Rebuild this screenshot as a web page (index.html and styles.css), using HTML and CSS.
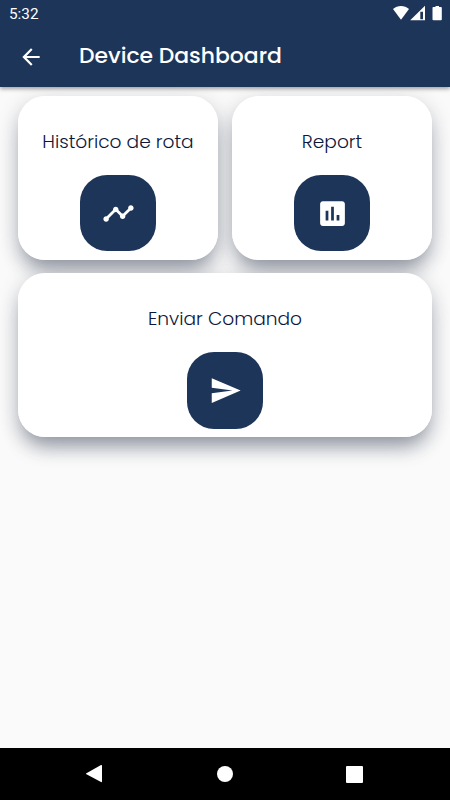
FILE: index.html
```html
<!DOCTYPE html>
<html lang="pt">
<head>
    <meta charset="UTF-8">
    <meta name="viewport" content="width=device-width, initial-scale=1.0">
    <title>Device Dashboard</title>
    <link rel="stylesheet" href="styles.css">
</head>
<body>
    <header class="header">
        <div class="status-bar">
            <span class="clock">5:32</span>
            <svg class="status-icons" width="52" height="18" viewBox="0 0 52 18" fill="#fff">
                <path d="M2 4C6.500 0 13.500 0 18 4L10 14.800Z"/>
                <path fill-rule="evenodd" d="M19.200 15.300L34 0.800V15.300ZM29.300 6.800V14.300H32V6.800Z"/>
                <path d="M42.300 2H44.500V1H48V2H50Q50.800 2 50.800 3V14.500Q50.800 15.300 49.800 15.300H42.500Q41.500 15.300 41.500 14.500V3Q41.500 2 42.300 2Z"/>
            </svg>
        </div>
        <div class="app-bar">
            <svg class="back" width="26" height="26" viewBox="0 0 24 24" fill="#fff">
                <path d="M20 11H7.830l5.590-5.590L12 4l-8 8 8 8 1.410-1.410L7.830 13H20v-2z"/>
            </svg>
            <h1>Device Dashboard</h1>
        </div>
    </header>

    <main class="dashboard">
        <div class="card">
            <h2>Histórico de rota</h2>
            <div class="tile">
                <svg width="33" height="33" viewBox="0 0 24 24" fill="#fff">
                    <path d="M23 8c0 1.100-.9 2-2 2-.18 0-.35-.02-.51-.07l-3.560 3.550c.05.16.07.34.07.52 0 1.100-.9 2-2 2s-2-.9-2-2c0-.18.02-.36.07-.52l-2.550-2.550c-.16.05-.34.07-.52.07s-.36-.02-.52-.07l-4.550 4.560c.05.16.07.33.07.51 0 1.100-.9 2-2 2s-2-.9-2-2 .9-2 2-2c.18 0 .35.02.51.07l4.560-4.550C8.020 9.360 8 9.180 8 9c0-1.100.9-2 2-2s2 .9 2 2c0 .18-.02.36-.07.52l2.550 2.550c.16-.05.34-.07.52-.07s.36.02.52.07l3.550-3.560C19.020 8.350 19 8.180 19 8c0-1.100.9-2 2-2s2 .9 2 2z"/>
                </svg>
            </div>
        </div>
        <div class="card">
            <h2>Report</h2>
            <div class="tile">
                <svg width="33" height="33" viewBox="0 0 24 24" fill="#fff">
                    <path d="M19 3H5c-1.100 0-2 .9-2 2v14c0 1.100.9 2 2 2h14c1.100 0 2-.9 2-2V5c0-1.100-.9-2-2-2zM9 17H7v-7h2v7zm4 0h-2V7h2v10zm4 0h-2v-4h2v4z"/>
                </svg>
            </div>
        </div>
        <div class="card wide">
            <h2>Enviar Comando</h2>
            <div class="tile">
                <svg width="33" height="33" viewBox="0 0 24 24" fill="#fff">
                    <path d="M2.010 21L23 12 2.010 3 2 10l15 2-15 2z"/>
                </svg>
            </div>
        </div>
    </main>

    <nav class="nav-bar">
        <svg width="18" height="20" viewBox="0 0 18 20" fill="#fff">
            <path d="M0 9.500L15 1.100Q16 0.800 16 1.800V17.200Q16 18.500 15 18L0 9.900Z"/>
        </svg>
        <span class="home"></span>
        <span class="recents"></span>
    </nav>
</body>
</html>
```

FILE: styles.css
```css
* {
    box-sizing: border-box;
}

body {
    margin: 0;
    height: 800px;
    display: flex;
    flex-direction: column;
    overflow: hidden;
    background-color: #fafafa;
    font-family: 'Poppins', 'Inter', sans-serif;
}

.header {
    position: relative;
    z-index: 2;
    height: 87px;
    flex: none;
    background-color: #1d3559;
    color: #fff;
    box-shadow: 0 2px 4px rgba(0,0,0,0.35);
}

.status-bar {
    height: 26px;
    padding: 5px 7px 0 9px;
    display: flex;
    justify-content: space-between;
}

.clock {
    font-family: 'Roboto', sans-serif;
    font-size: 15.3px;
    line-height: 18px;
}

.app-bar {
    height: 61px;
    padding-left: 18px;
    display: flex;
    align-items: center;
}

.back {
    flex: none;
}

h1 {
    margin: -3px 0 0 35px;
    font-size: 21.9px;
    font-weight: 500;
    white-space: nowrap;
}

.dashboard {
    position: relative;
    z-index: 1;
    flex: 1;
    padding: 9px 17.6px;
    display: grid;
    grid-template-columns: 1fr 1fr;
    grid-template-rows: 164px 164px;
    gap: 13.3px;
}

.card {
    position: relative;
    border-radius: 27px;
    background-color: #fff;
    display: flex;
    flex-direction: column;
    align-items: center;
    padding-top: 32px;
}

/* shadow sits under all the cards */
.card::before {
    content: '';
    position: absolute;
    inset: 0;
    z-index: -1;
    border-radius: 27px;
    box-shadow: 0 14px 20px -5px rgba(29,40,63,0.42), 0 4px 22px rgba(29,40,63,0.16);
}

.wide {
    grid-column: span 2;
}

h2 {
    margin: 0 0 18.800px;
    font-size: 18.6px;
    line-height: 28px;
    font-weight: 300;
    color: #0b173c;
    white-space: nowrap;
}

.tile {
    width: 76.5px;
    height: 76.5px;
    padding: 1px 0 0 1px;
    border-radius: 27px;
    background-color: #1d3559;
    display: flex;
    align-items: center;
    justify-content: center;
}

.wide .tile {
    padding: 0;
}

.nav-bar {
    height: 52px;
    flex: none;
    padding: 0 87px 0 86px;
    background-color: #000;
    display: flex;
    align-items: center;
    justify-content: space-between;
}

.home {
    width: 16px;
    height: 16px;
    border-radius: 50%;
    background-color: #fff;
}

.recents {
    width: 17px;
    height: 17px;
    border-radius: 1px;
    background-color: #fff;
}
```
